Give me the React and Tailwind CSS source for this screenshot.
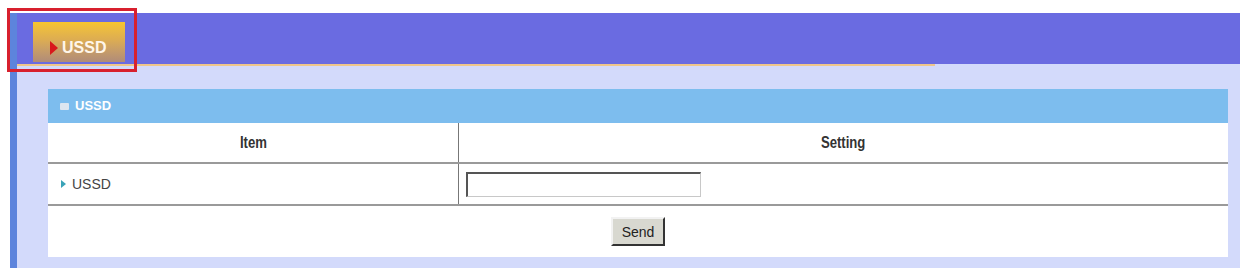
import React from 'react';

const narrow = { fontFamily: '"Liberation Sans Narrow", "Liberation Sans", Arial, sans-serif' };

export default function App() {
  return (
    <div className="w-[1242px] h-[268px] bg-white overflow-hidden pl-[10px] pt-[13px] relative" style={{ fontFamily: '"Liberation Sans", Arial, sans-serif' }}>
      <div className="w-[1230px] h-[255px] flex border-l-[7px] border-[#5d84dc]">
        <div className="flex-1 flex flex-col bg-[#d3dafb]">
          <div className="h-[51px] bg-[#6a6be1] pl-[16px] pt-[9px]">
            <div className="w-[92px] h-[40px] bg-gradient-to-b from-[#f6c52e] via-[#dcac52] via-45% to-[#b08b78] flex items-end pb-[4px] pl-[17px] gap-[4px]">
              <span className="w-0 h-0 border-y-[7px] border-y-transparent border-l-[8px] border-l-[#d8181c] mb-[3px]"></span>
              <span className="text-[#fff6ea] font-bold text-[16px] leading-[20px]">USSD</span>
            </div>
          </div>
          <div className="h-[2px] w-[918px] bg-[#efc68a]"></div>
          <div className="pl-[31px] pr-[12px] pt-[23px]">
            <div className="h-[34px] bg-[#7dbdee] flex items-center pl-[12px] gap-[6px]">
              <span className="w-[9px] h-[7px] bg-[#dde6f0] rounded-[1px]"></span>
              <span className="text-white font-bold text-[13px]">USSD</span>
            </div>
            <div className="bg-white text-[14px]">
              <div className="flex h-[41px] border-b-2 border-[#9a9a9a]">
                <div className="w-[411px] border-r border-[#777] flex items-center justify-center">
                  <span className="text-[#333] font-bold text-[16px] scale-x-[0.82]" style={narrow}>Item</span>
                </div>
                <div className="flex-1 flex items-center justify-center">
                  <span className="text-[#333] font-bold text-[16px] scale-x-[0.82]" style={narrow}>Setting</span>
                </div>
              </div>
              <div className="flex h-[42px] border-b-2 border-[#9a9a9a]">
                <div className="w-[411px] border-r border-[#777] flex items-center pl-[13px] gap-[6px] text-[#444]">
                  <span className="w-0 h-0 border-y-[4px] border-y-transparent border-l-[5px] border-l-[#3aa3b8]"></span>
                  <span>USSD</span>
                </div>
                <div className="flex-1 flex items-center pl-[7px]">
                  <div className="w-[235px] h-[25px] border border-[#c8c8c8] border-t-2 border-l-2 border-t-[#555] border-l-[#555] bg-white"></div>
                </div>
              </div>
              <div className="h-[51px] flex items-center justify-center">
                <button className="w-[54px] h-[29px] bg-[#d8d8d0] border-2 border-t-[#f2f2f2] border-l-[#f2f2f2] border-b-[#333] border-r-[#333] text-[14px] text-[#222] leading-none" style={narrow}>Send</button>
              </div>
            </div>
          </div>
        </div>
      </div>
      <div className="absolute left-[7px] top-[8px] w-[130px] h-[64px] border-[3px] border-[#d8202e]"></div>
    </div>
  );
}
